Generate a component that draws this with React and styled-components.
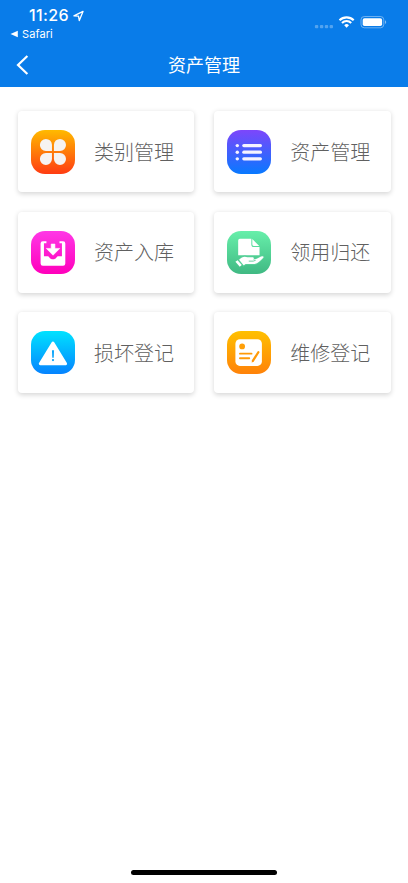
import React from "react";
import styled, { createGlobalStyle } from "styled-components";

const GlobalStyle = createGlobalStyle`
  * {
    box-sizing: border-box;
  }

  body {
    margin: 0;
    background: #fff;
    font-family: "Noto Sans CJK SC", sans-serif;
  }
`;

const Page = styled.div`
  display: flex;
  flex-direction: column;
  height: 883px;
  overflow: hidden;
`;

const Header = styled.header`
  height: 87px;
  background: #097ce9;
  color: #fff;
`;

const StatusBar = styled.div`
  display: flex;
  justify-content: space-between;
  height: 43px;
  padding: 7px 21px 0 10px;
`;

const Clock = styled.div`
  display: flex;
  align-items: center;
  gap: 4px;
  height: 17px;
  padding-left: 19px;
  font: 500 16px/17px Inter, sans-serif;
  letter-spacing: 0.35px;
`;

const BackToApp = styled.div`
  display: flex;
  align-items: center;
  gap: 4px;
  height: 14px;
  margin-top: 3px;
  font: 400 11px/14px Inter, sans-serif;
  letter-spacing: 0.1px;
`;

const Signals = styled.div`
  display: flex;
  align-items: center;
  height: 14px;
  margin-top: 8px;
`;

const NavBar = styled.nav`
  display: grid;
  grid-template-columns: 44px 1fr 44px;
  align-items: center;
  height: 44px;
`;

const BackButton = styled.button`
  display: flex;
  padding: 0 0 0 15px;
  border: 0;
  background: none;
  color: inherit;
`;

const Title = styled.h1`
  margin: 0;
  padding-bottom: 2px;
  font-size: 18px;
  line-height: 26px;
  font-weight: 400;
  text-align: center;
`;

const Menu = styled.main`
  display: grid;
  flex: 1;
  grid-template-columns: 1fr 1fr;
  grid-auto-rows: 81px;
  gap: 19.4px;
  align-content: start;
  padding: 24.4px 17.5px 0;
`;

const Card = styled.div`
  display: flex;
  align-items: center;
  gap: 19.3px;
  padding: 0 13.7px;
  border-radius: 4px;
  background: #fff;
  box-shadow: 0 1.5px 5px rgba(0, 0, 0, 0.16);
`;

const Tile = styled.div`
  width: 43.5px;
  height: 43.5px;
  flex: none;
  border-radius: 14px;
  background: linear-gradient(${(props) => props.$from}, ${(props) => props.$to});

  svg {
    display: block;
    width: 100%;
    height: 100%;
  }
`;

const Label = styled.span`
  color: #606060;
  font-size: 20px;
  font-weight: 300;
  line-height: 30px;
  white-space: nowrap;
`;

const HomeIndicator = styled.div`
  width: 146px;
  height: 5px;
  margin: 0 auto 8px;
  border-radius: 3px;
  background: #000;
`;

const Petals = () => (
  <svg viewBox="0 0 44 44" fill="#f6f3f1">
    <path d="M21.2 21.2H15A6.1 6.1 0 1 1 21.2 15z" />
    <path d="M23.2 21.2V15a6.1 6.1 0 1 1 6.2 6.2z" />
    <path d="M21.2 23.2v6.2A6.1 6.1 0 1 1 15 23.2z" />
    <path d="M23.2 23.2h6.2a6.1 6.1 0 1 1-6.2 6.2z" />
  </svg>
);

const List = () => (
  <svg viewBox="0 0 44 44" fill="#f5f3ff">
    {[15.8, 22.4, 29.2].map((y) => (
      <g key={y}>
        <circle cx="10.4" cy={y} r="1.75" />
        <rect x="15.4" y={y - 1.6} width="20" height="3.2" rx="1.6" />
      </g>
    ))}
  </svg>
);

const Inbox = () => (
  <svg viewBox="0 0 44 44" fill="#fff">
    <path d="M12 10.4h3.6v1.9h-2.5v13.2h4.2c1 .2 1.5 3.1 4.9 3.1s3.9-2.9 4.9-3.1h4.2V12.3h-2.5v-1.9h3.6a2.3 2.3 0 0 1 2.3 2.3v20.2a2.3 2.3 0 0 1-2.3 2.3H12a2.3 2.3 0 0 1-2.3-2.3V12.7a2.3 2.3 0 0 1 2.3-2.3z" />
    <path
      d="M20.4 13.2h3.8v4.4h4.9l-6.8 6.9-6.8-6.9h4.9z"
      stroke="#fff"
      strokeWidth=".6"
      strokeLinejoin="round"
    />
  </svg>
);

const HandDocument = () => (
  <svg viewBox="0 0 44 44" fill="#fff">
    <path d="M13.2 7.9H24.6v5.700a2.600 2.600 0 0 0 2.600 2.600h5.700V24.500H11.300V9.700a1.800 1.800 0 0 1 1.900-1.800z" />
    <path d="M25.6 8.200l7 6.900h-5.500a1.500 1.500 0 0 1-1.500-1.500z" />
    <path
      d="M12.200 29c2.800-3 5.800-3.800 8.400-2.400H25.500c2 0 2.200 1.900.6 2.500l4-1.100c2-.8 3.800-2.300 5.700-2.500 1.200-.1 1.600.8.700 1.700-2.700 2.500-5.200 5.500-8.600 6.100h-8.200c-1.200 0-2 .7-2.900 1.400z"
      stroke="#57cf98"
      strokeWidth="2"
      paintOrder="stroke"
    />
    <path d="M22 30.500h4.500l2.500-.9" fill="none" stroke="#4dc48d" strokeWidth=".8" />
    <path d="M10.700 29.600l4.300 4.900-2.100 1.700-4.400-5z" />
  </svg>
);

const Warning = () => (
  <svg viewBox="0 0 44 44">
    <path
      d="M22.200 12.200L35 33.200H9.400z"
      fill="#fff"
      stroke="#fff"
      strokeWidth="3"
      strokeLinejoin="round"
    />
    <path d="M21.200 19.400h2.100l-.3 7.600h-1.500z" fill="#0ba4fa" />
    <circle cx="22.250" cy="29.400" r="1.150" fill="#0ba4fa" />
  </svg>
);

const EditNote = () => (
  <svg viewBox="0 0 44 44">
    <rect x="8.500" y="8.300" width="26.800" height="27" rx="4.500" fill="#fff" />
    <circle cx="15.300" cy="15.600" r="2.900" fill="#ff9f08" />
    <g stroke="#ff9a08" strokeLinecap="round" strokeWidth="1.900">
      <path d="M13.100 22.900H24.800M13.100 27.600H22.500" />
      <path d="M31.700 21.500L26.300 30" strokeWidth="2.300" />
    </g>
    <path d="M25.300 29l2.100 1.400-2.400 1.600z" fill="#ff930a" />
  </svg>
);

const items = [
  { label: "类别管理", icon: Petals, from: "#ffba00", to: "#ff3c12" },
  { label: "资产管理", icon: List, from: "#7d46fb", to: "#0879ff" },
  { label: "资产入库", icon: Inbox, from: "#ff38e6", to: "#ff00bb" },
  { label: "领用归还", icon: HandDocument, from: "#67efaa", to: "#40b983" },
  { label: "损坏登记", icon: Warning, from: "#00e2ff", to: "#0583ff" },
  { label: "维修登记", icon: EditNote, from: "#ffc000", to: "#ff8209" },
];

function StatusIcons() {
  return (
    <Signals>
      <svg width="73" height="14" viewBox="0 0 73 14">
        <g fill="#fff" fillOpacity=".3">
          {[2.6, 7.6, 12.5, 17.3].map((x) => (
            <rect key={x} x={x - 1.7} y="10" width="3.400" height="3.300" rx="1" />
          ))}
        </g>
        <g fill="none" stroke="#fff" strokeWidth="2.100">
          <path d="M25.500 5.300a10 10 0 0 1 14.200 0" />
          <path d="M28 8a6.400 6.400 0 0 1 9.200 0" />
        </g>
        <path d="M30.200 10.200a3.500 3.500 0 0 1 4.800 0l-2.400 2.600z" fill="#fff" />
        <rect x="47" y="1.500" width="22.800" height="11.300" rx="3.300" fill="none" stroke="#fff" strokeOpacity=".4" />
        <rect x="48.700" y="3.200" width="19.400" height="7.900" rx="1.800" fill="#fff" />
        <path d="M71 5.300c1.600.6 1.600 3.200 0 3.800z" fill="#fff" fillOpacity=".5" />
      </svg>
    </Signals>
  );
}

export default function App() {
  return (
    <Page>
      <GlobalStyle />
      <Header>
        <StatusBar>
          <div>
            <Clock>
              11:26
              <svg width="11" height="12" viewBox="0 0 11 12">
                <path
                  d="M.9 5.900L10 1.400 6.300 10.600 5.500 6.200z"
                  fill="none"
                  stroke="#fff"
                  strokeWidth="1.300"
                  strokeLinejoin="round"
                />
              </svg>
            </Clock>
            <BackToApp>
              <svg width="8" height="8" viewBox="0 0 8 8">
                <path d="M.5 4L7.800 .8v6.400z" fill="#fff" />
              </svg>
              Safari
            </BackToApp>
          </div>
          <StatusIcons />
        </StatusBar>
        <NavBar>
          <BackButton aria-label="返回">
            <svg width="14" height="20" viewBox="0 0 14 20">
              <path d="M12.400 1L3 10l9.400 9" fill="none" stroke="#fff" strokeWidth="2.200" />
            </svg>
          </BackButton>
          <Title>资产管理</Title>
        </NavBar>
      </Header>
      <Menu>
        {items.map(({ label, icon: Icon, from, to }) => (
          <Card key={label}>
            <Tile $from={from} $to={to}>
              <Icon />
            </Tile>
            <Label>{label}</Label>
          </Card>
        ))}
      </Menu>
      <HomeIndicator />
    </Page>
  );
}
